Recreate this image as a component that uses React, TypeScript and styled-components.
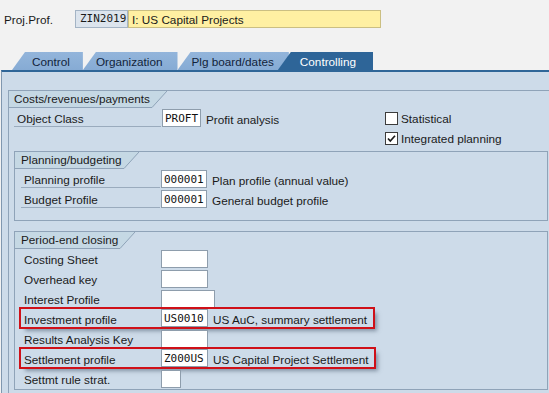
import React from 'react'
import styled, { createGlobalStyle, css } from 'styled-components'

const mono = `"DejaVu Sans Mono", "Liberation Mono", monospace`
const lineColor = '#8fa3b8'
const titleBg = '#c5d8e4'

const GlobalStyle = createGlobalStyle`
  html, body {
    margin: 0;
    padding: 0;
  }
  body {
    background: #f2f2f2;
    font-family: "Liberation Sans", Arial, sans-serif;
    font-size: 11.75px;
    color: #1a1a1a;
  }
`

const Screen = styled.div`
  width: 549px;
  height: 393px;
  overflow: hidden;
  background: #f2f2f2;
`

const HeaderBar = styled.div`
  display: flex;
  align-items: center;
  height: 18px;
  padding: 10px 0 0 4px;
`

const HeaderLabel = styled.div`
  width: 71px;
  padding-top: 1px;
`

const KeyField = styled.div`
  box-sizing: border-box;
  width: 53px;
  height: 18px;
  line-height: 16px;
  padding-left: 4px;
  background: #dce4ed;
  border: 1px solid #a4b4c5;
  font-family: ${mono};
  font-size: 11px;
`

const DescField = styled.div`
  box-sizing: border-box;
  width: 253px;
  height: 18px;
  line-height: 17px;
  padding-left: 3px;
  background: #fff0a2;
  border: 1px solid #cbbf82;
`

const TabStrip = styled.div`
  display: flex;
  align-items: flex-end;
  height: 18px;
  margin-top: 24px;
  padding-left: 12px;
`

const Tab = styled.div<{ $active?: boolean; $pl: number; $pr: number; $overlap?: number }>`
  height: 18px;
  line-height: 19px;
  padding: 0 ${p => p.$pr}px 0 ${p => p.$pl}px;
  margin-left: ${p => -(p.$overlap || 0)}px;
  white-space: nowrap;
  clip-path: polygon(0 100%, 13px 0, 100% 0, 100% 100%);
  background: linear-gradient(#93b5db, #86abd4);
  color: #12233a;
  ${p => p.$active && css`
    background: #2e6598;
    color: #fff;
    position: relative;
  `}
`

const Panel = styled.div`
  margin-left: 1px;
  height: 400px;
  padding: 18px 0 0 6px;
  background: #cddbe9;
  border-left: 1px solid #8097af;
  border-top: 2px solid #2f6698;
`

const Group = styled.div<{ $outer?: boolean }>`
  border: 1px solid ${lineColor};
  ${p => p.$outer ? css`
    margin-right: -40px;
    height: 400px;
  ` : css`
    width: 532px;
    margin-left: 5px;
  `}
`

const GroupTitle = styled.div`
  display: flex;
  height: 17px;
`

const TitleText = styled.div<{ $pl: number }>`
  height: 16px;
  line-height: 16px;
  padding: 0 2px 0 ${p => p.$pl}px;
  background: ${titleBg};
  border-bottom: 1px solid ${lineColor};
`

const Slant = () => (
  <svg width="15" height="17" viewBox="0 0 15 17" style={{ display: 'block' }}>
    <polygon points="0,0 15,0 0,17" fill={titleBg} />
    <line x1="0" y1="16.5" x2="15" y2="0" stroke={lineColor} strokeWidth="1" />
  </svg>
)

const TopSection = styled.div`
  display: grid;
  grid-template-columns: 371px auto;
  grid-auto-rows: 20px;
  padding-left: 5px;
`

const Checks = styled.div`
  grid-column: 2;
  grid-row: 1 / span 2;
`

const CheckRow = styled.div`
  display: flex;
  align-items: center;
  gap: 3px;
  height: 20px;

  span {
    padding-top: 1px;
  }
`

const CheckBox = styled.div`
  box-sizing: border-box;
  width: 13px;
  height: 13px;
  background: #fff;
  border: 1px solid #3c3c3c;

  svg {
    display: block;
  }
`

const Rows = styled.div<{ $inset: number; $pb?: number }>`
  display: flex;
  flex-direction: column;
  align-items: flex-start;
  padding: 0 0 ${p => p.$pb || 0}px ${p => p.$inset}px;
`

const Row = styled.div<{ $mark?: boolean }>`
  display: flex;
  align-items: center;
  height: 20px;
  ${p => p.$mark && css`
    height: 18px;
    margin-bottom: 2px;
    padding-right: 6px;
    outline: 2px solid #cf1018;
    box-shadow: 4px 4px 4px rgba(70, 85, 105, 0.55);
  `}
`

const Label = styled.div<{ $w: number; $line?: boolean }>`
  box-sizing: border-box;
  width: ${p => p.$w}px;
  height: ${p => p.$line ? 19 : 18}px;
  align-self: flex-start;
  line-height: 18px;
  padding: 2px 0 0 3px;
  margin-right: 1px;
  white-space: nowrap;
  border-bottom: ${p => p.$line ? `1px solid #9aabbd` : 'none'};
`

const Field = styled.div<{ $w: number }>`
  box-sizing: border-box;
  width: ${p => p.$w}px;
  height: 18px;
  line-height: 17px;
  padding-left: 2px;
  background: #fff;
  border: 1px solid #8e9dac;
  font-family: ${mono};
  font-size: 11px;
  color: #111;
`

const Desc = styled.div`
  margin-left: 5px;
  padding-top: 2px;
  white-space: nowrap;
`

type Entry = { label: string; value?: string; width: number; desc?: string; mark?: boolean }

const planning: Entry[] = [
  { label: 'Planning profile', value: '000001', width: 46, desc: 'Plan profile (annual value)' },
  { label: 'Budget Profile', value: '000001', width: 46, desc: 'General budget profile' },
]

const closing: Entry[] = [
  { label: 'Costing Sheet', width: 47 },
  { label: 'Overhead key', width: 47 },
  { label: 'Interest Profile', width: 54 },
  { label: 'Investment profile', value: 'US0010', width: 47, desc: 'US AuC, summary settlement', mark: true },
  { label: 'Results Analysis Key', width: 47 },
  { label: 'Settlement profile', value: 'Z000US', width: 47, desc: 'US Capital Project Settlement', mark: true },
  { label: 'Settmt rule strat.', width: 20 },
]

const EntryRow = ({ entry, line }: { entry: Entry; line?: boolean }) => (
  <Row $mark={entry.mark}>
    <Label $w={139} $line={line}>{entry.label}</Label>
    <Field $w={entry.width}>{entry.value}</Field>
    {entry.desc && <Desc>{entry.desc}</Desc>}
  </Row>
)

const Check = ({ checked, label }: { checked?: boolean; label: string }) => (
  <CheckRow>
    <CheckBox>
      {checked && (
        <svg width="11" height="11" viewBox="0 0 11 11">
          <path d="M2 5.5 L4.3 8 L9 2.8" fill="none" stroke="#1c1c1c" strokeWidth="1.7" />
        </svg>
      )}
    </CheckBox>
    <span>{label}</span>
  </CheckRow>
)

const App = () => {
  return (
    <Screen>
      <GlobalStyle />
      <HeaderBar>
        <HeaderLabel>Proj.Prof.</HeaderLabel>
        <KeyField>ZIN2019</KeyField>
        <DescField>I: US Capital Projects</DescField>
      </HeaderBar>

      <TabStrip>
        <Tab $pl={20} $pr={13}>Control</Tab>
        <Tab $pl={13} $pr={15}>Organization</Tab>
        <Tab $pl={14} $pr={15}>Plg board/dates</Tab>
        <Tab $pl={22} $pr={17} $overlap={11} $active>Controlling</Tab>
      </TabStrip>

      <Panel>
        <Group $outer>
          <GroupTitle>
            <TitleText $pl={5}>Costs/revenues/payments</TitleText>
            <Slant />
          </GroupTitle>
          <TopSection>
            <Row>
              <Label $w={147} $line>Object Class</Label>
              <Field $w={39}>PROFT</Field>
              <Desc>Profit analysis</Desc>
            </Row>
            <Checks>
              <Check label="Statistical" />
              <Check label="Integrated planning" checked />
            </Checks>
          </TopSection>

          <Group style={{ marginTop: 3 }}>
            <GroupTitle>
              <TitleText $pl={6}>Planning/budgeting</TitleText>
              <Slant />
            </GroupTitle>
            <Rows $inset={6} $pb={11}>
              {planning.map(e => <EntryRow key={e.label} entry={e} line />)}
            </Rows>
          </Group>

          <Group style={{ marginTop: 10 }}>
            <GroupTitle>
              <TitleText $pl={6}>Period-end closing</TitleText>
              <Slant />
            </GroupTitle>
            <Rows $inset={6}>
              {closing.map(e => <EntryRow key={e.label} entry={e} />)}
            </Rows>
          </Group>
        </Group>
      </Panel>
    </Screen>
  )
}

export default App
